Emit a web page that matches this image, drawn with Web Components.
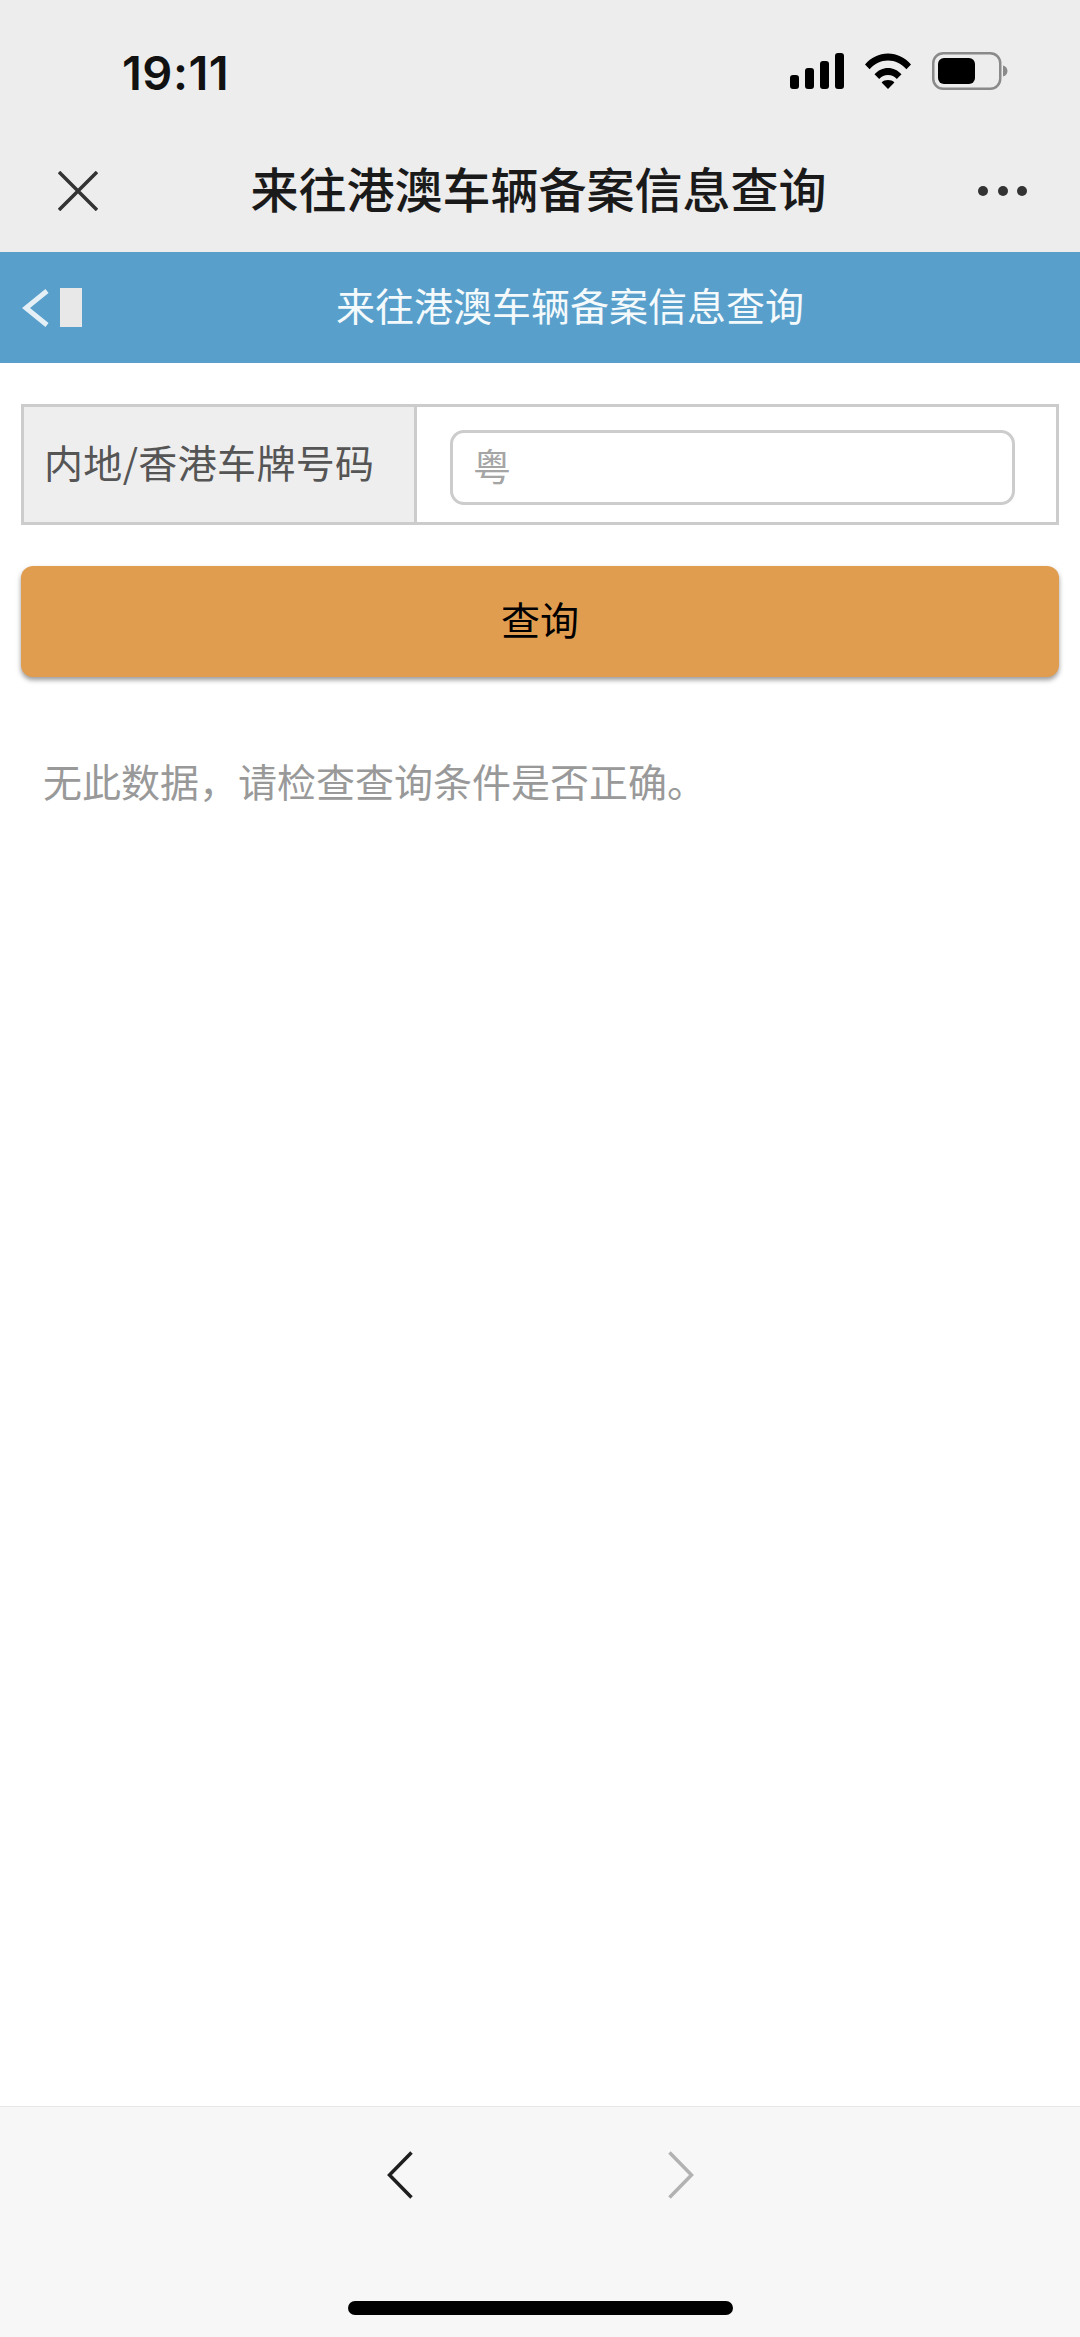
<!DOCTYPE html>
<html lang="zh-CN">
<head>
<meta charset="utf-8">
<title>来往港澳车辆备案信息查询</title>
<style>
  html, body { margin: 0; padding: 0; background: #fff; }
  body { font-family: "Noto Sans CJK SC", "Noto Sans", sans-serif; }
</style>
</head>
<body>
<app-shell>
  <status-bar slot="top" time="19:11"></status-bar>
  <wechat-bar slot="top">来往港澳车辆备案信息查询</wechat-bar>
  <page-header slot="top">来往港澳车辆备案信息查询</page-header>
  <plate-form label="内地/香港车牌号码" placeholder="粤" action="查询"></plate-form>
  <empty-note>无此数据，请检查查询条件是否正确。</empty-note>
  <browser-nav slot="bottom"></browser-nav>
</app-shell>

<script>
const shellTemplate = document.createElement('template')
shellTemplate.innerHTML = `
<style>
  :host { display: flex; flex-direction: column; width: 1080px; height: 2337px; overflow: hidden; background: #fff; }
  main { flex: 1; padding: 0 21px; }
</style>
<slot name="top"></slot>
<main><slot></slot></main>
<slot name="bottom"></slot>
`
class AppShell extends HTMLElement {
  constructor() {
    super()
    this.attachShadow({ mode: 'open' })
    this.shadowRoot.appendChild(shellTemplate.content.cloneNode(true))
  }
}
customElements.define('app-shell', AppShell)

const statusTemplate = document.createElement('template')
statusTemplate.innerHTML = `
<style>
  :host { display: flex; align-items: center; justify-content: space-between; height: 142px; padding: 0 72px 0 122px; box-sizing: border-box; background: #ededed; }
  .time { font: 600 47px/1 Inter, "Noto Sans", sans-serif; color: #111; letter-spacing: 0.5px; position: relative; top: 1px; }
  .icons { display: flex; align-items: center; gap: 21px; }
  svg { display: block; }
</style>
<span class="time"></span>
<div class="icons">
  <svg width="54" height="36" viewBox="0 0 54 36">
    <rect x="0" y="22" width="9" height="14" rx="3"/>
    <rect x="15" y="15" width="9" height="21" rx="3"/>
    <rect x="30" y="8" width="9" height="28" rx="3"/>
    <rect x="45" y="0" width="9" height="36" rx="3"/>
  </svg>
  <svg width="46" height="36" viewBox="0 0 46 36">
    <path d="M0 11.5C6 4.5 14 .5 23 .5s17 4 23 11l-4.6 4.8C36.400 10.700 30 7.500 23 7.500S9.600 10.700 4.600 16.300z"/>
    <path d="M9.500 21.300C13 17.300 17.800 15 23 15s10 2.300 13.500 6.300l-4.700 4.800C29.500 23.500 26.500 22 23 22s-6.500 1.500-8.800 4.100z"/>
    <path d="M23 36l-6.400-6.600C18.200 27.800 20.500 27 23 27s4.800.8 6.400 2.400z"/>
  </svg>
  <svg width="76" height="38" viewBox="0 0 76 38">
    <rect x="1.250" y="1.250" width="67" height="35.500" rx="10" fill="none" stroke="#8a8a8a" stroke-width="2.500"/>
    <rect x="6" y="6" width="37" height="26" rx="6"/>
    <path d="M71 13.500c2.800.8 4.500 3 4.500 5.500s-1.700 4.700-4.500 5.500z" fill="#8a8a8a"/>
  </svg>
</div>
`
class StatusBar extends HTMLElement {
  constructor() {
    super()
    this.attachShadow({ mode: 'open' })
    this.shadowRoot.appendChild(statusTemplate.content.cloneNode(true))
    this.shadowRoot.querySelector('.time').textContent = this.getAttribute('time')
  }
}
customElements.define('status-bar', StatusBar)

const wechatTemplate = document.createElement('template')
wechatTemplate.innerHTML = `
<style>
  :host { display: grid; grid-template-columns: 1fr auto 1fr; align-items: center; height: 110px; padding: 0 53px 12px 58px; box-sizing: border-box; background: #ededed; }
  .title { font: 500 48px/1.2 "Noto Sans CJK SC", sans-serif; color: #1a1a1a; white-space: nowrap; position: relative; left: -4px; top: -3px; }
  .more { justify-self: end; display: flex; gap: 9.500px; }
  .more i { width: 10px; height: 10px; border-radius: 50%; background: #333; }
  svg { display: block; }
</style>
<svg width="40" height="40" viewBox="0 0 40 40"><path d="M1 1l38 38M39 1L1 39" stroke="#333" stroke-width="3.500" fill="none"/></svg>
<span class="title"><slot></slot></span>
<div class="more"><i></i><i></i><i></i></div>
`
class WechatBar extends HTMLElement {
  constructor() {
    super()
    this.attachShadow({ mode: 'open' })
    this.shadowRoot.appendChild(wechatTemplate.content.cloneNode(true))
  }
}
customElements.define('wechat-bar', WechatBar)

const headerTemplate = document.createElement('template')
headerTemplate.innerHTML = `
<style>
  :host { display: grid; grid-template-columns: 60px 1fr 60px; align-items: center; height: 111px; padding: 0 0 0 22px; box-sizing: border-box; background: #58a0cb; color: #fff; }
  .back { display: flex; align-items: center; gap: 11px; }
  .back i { display: block; width: 22px; height: 39px; background: #e8e8e8; }
  .title { text-align: center; font: 400 39px/1.2 "Noto Sans CJK SC", sans-serif; color: #f4f9fc; padding: 0 0 6px 38px; white-space: nowrap; }
  svg { display: block; flex: none; filter: blur(0.6px); }
</style>
<div class="back">
  <svg width="27" height="38" viewBox="0 0 27 38"><path d="M25 2L4 19l21 17" stroke="#e4eff6" stroke-width="5" fill="none"/></svg>
  <i></i>
</div>
<span class="title"><slot></slot></span>
<span></span>
`
class PageHeader extends HTMLElement {
  constructor() {
    super()
    this.attachShadow({ mode: 'open' })
    this.shadowRoot.appendChild(headerTemplate.content.cloneNode(true))
  }
}
customElements.define('page-header', PageHeader)

const formTemplate = document.createElement('template')
formTemplate.innerHTML = `
<style>
  :host { display: block; padding-top: 41px; font-family: "Noto Sans CJK SC", sans-serif; }
  .row { display: grid; grid-template-columns: 393px 1fr; height: 121px; box-sizing: border-box; border: 3px solid #ccc; }
  .label { display: flex; align-items: center; padding: 0 0 7px 20px; background: #eee; border-right: 3px solid #ccc; font-size: 39px; letter-spacing: 0.35px; color: #555; white-space: nowrap; }
  .cell { display: flex; align-items: center; padding: 5px 41px 0 33px; }
  .input { flex: 1; display: flex; align-items: center; height: 75px; box-sizing: border-box; padding: 0 0 5px 20px; border: 3px solid #ccc; border-radius: 14px; font-size: 38px; color: #a5a5a5; }
  button { display: block; width: 100%; height: 111px; margin-top: 41px; padding: 0 0 7px; border: 0; border-radius: 12px; background: #e09c4f; box-shadow: 0 3px 5px rgba(0, 0, 0, 0.4); font: 400 39px "Noto Sans CJK SC", sans-serif; color: #000; }
</style>
<div class="row">
  <div class="label"></div>
  <div class="cell"><div class="input"></div></div>
</div>
<button type="button"></button>
`
class PlateForm extends HTMLElement {
  constructor() {
    super()
    this.attachShadow({ mode: 'open' })
    this.shadowRoot.appendChild(formTemplate.content.cloneNode(true))
    this.shadowRoot.querySelector('.label').textContent = this.getAttribute('label')
    this.shadowRoot.querySelector('.input').textContent = this.getAttribute('placeholder')
    this.shadowRoot.querySelector('button').textContent = this.getAttribute('action')
  }
}
customElements.define('plate-form', PlateForm)

const noteTemplate = document.createElement('template')
noteTemplate.innerHTML = `
<style>
  :host { display: block; margin-top: 75px; padding-left: 22px; font: 400 39px/56px "Noto Sans CJK SC", sans-serif; color: #999; white-space: nowrap; }
</style>
<slot></slot>
`
class EmptyNote extends HTMLElement {
  constructor() {
    super()
    this.attachShadow({ mode: 'open' })
    this.shadowRoot.appendChild(noteTemplate.content.cloneNode(true))
  }
}
customElements.define('empty-note', EmptyNote)

const navTemplate = document.createElement('template')
navTemplate.innerHTML = `
<style>
  :host { display: block; height: 231px; box-sizing: border-box; padding-top: 44px; background: #f7f7f7; border-top: 1px solid #e6e6e6; }
  .arrows { display: flex; justify-content: center; gap: 255px; }
  .home { width: 385px; height: 14px; margin: 102px auto 0; border-radius: 7px; background: #000; }
  svg { display: block; }
</style>
<div class="arrows">
  <svg width="26" height="48" viewBox="0 0 26 48"><path d="M24.500 1.500L2.500 24l22 22.500" stroke="#1f1f1f" stroke-width="3.500" fill="none"/></svg>
  <svg width="26" height="48" viewBox="0 0 26 48"><path d="M1.500 1.500L23.500 24l-22 22.500" stroke="#b2b2b2" stroke-width="3.500" fill="none"/></svg>
</div>
<div class="home"></div>
`
class BrowserNav extends HTMLElement {
  constructor() {
    super()
    this.attachShadow({ mode: 'open' })
    this.shadowRoot.appendChild(navTemplate.content.cloneNode(true))
  }
}
customElements.define('browser-nav', BrowserNav)
</script>
</body>
</html>
